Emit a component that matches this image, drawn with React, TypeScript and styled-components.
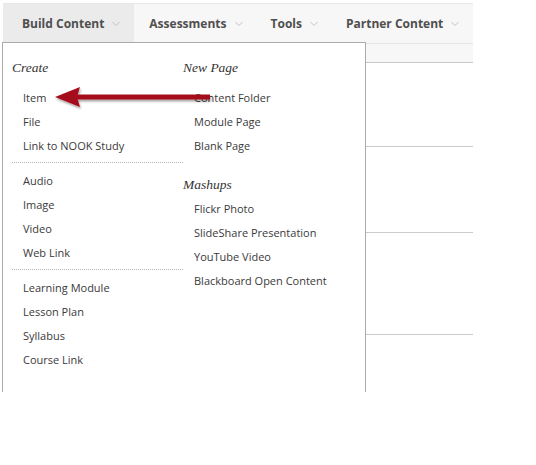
import React from "react";
import styled, { createGlobalStyle } from "styled-components";

const GlobalStyle = createGlobalStyle`
  html, body {
    margin: 0;
    padding: 0;
    background: #fff;
  }
  body {
    font-family: "Open Sans", "Liberation Sans", sans-serif;
  }
`;

const Page = styled.div`
  position: relative;
  width: 536px;
  height: 465px;
  overflow: hidden;
  background: #fff;
`;

const Frame = styled.div`
  width: 470px;
  margin-left: 3px;
  padding-top: 3px;
`;

const NavBar = styled.div`
  display: flex;
  height: 39px;
  background: #f7f7f7;
  border-top: 1px solid #e8e8e8;
  border-bottom: 1px solid #e4e4e4;
`;

const Tab = styled.div<{ $active?: boolean; $pl: number; $pr: number }>`
  display: flex;
  align-items: center;
  gap: 8px;
  padding: 0 ${(p) => p.$pr}px 0 ${(p) => p.$pl}px;
  background: ${(p) => (p.$active ? "#ebebeb" : "transparent")};
  color: #4f4f4f;
  font-size: 12px;
  font-weight: 700;
  white-space: nowrap;
`;

const SubBar = styled.div`
  height: 18px;
  background: #f7f7f7;
  border-bottom: 1px solid #c9c9c9;
`;

const Row = styled.div<{ $h: number }>`
  height: ${(p) => p.$h}px;
  border-bottom: 1px solid #cbcbcb;
`;

const Menu = styled.div`
  position: absolute;
  left: 2px;
  top: 42px;
  width: 364px;
  height: 350px;
  background: #fff;
  border: 1px solid #ababab;
  border-bottom: none;
  display: grid;
  grid-template-columns: 171px 1fr;
  padding: 13px 0 0 9px;
  box-sizing: border-box;
  color: #3d3d3d;
`;

const Column = styled.div`
  display: flex;
  flex-direction: column;
`;

const Heading = styled.div<{ $gap?: boolean; $top?: number }>`
  font-family: "Liberation Serif", "DejaVu Serif", serif;
  font-style: italic;
  font-size: 13.5px;
  line-height: 24px;
  color: #333;
  margin-top: ${(p) => p.$top ?? 0}px;
  margin-bottom: ${(p) => (p.$gap ? 6 : 0)}px;
`;

const Item = styled.div`
  font-size: 11px;
  line-height: 24px;
  padding-left: 11px;
  color: #3a3a3a;
  white-space: nowrap;
`;

const Divider = styled.div`
  margin: 4px 0 6px;
  border-top: 1px dotted #b5b5b5;
`;

const ArrowSvg = styled.svg`
  position: absolute;
  left: 50px;
  top: 82px;
  overflow: visible;
`;

const Chevron = () => (
  <svg width="8" height="6" viewBox="0 0 8 6">
    <polyline points="0.5,1 4,4.5 7.5,1" fill="none" stroke="#c4c4c4" strokeWidth="1" />
  </svg>
);

const tabs = [
  { label: "Build Content", active: true, pl: 19, pr: 14 },
  { label: "Assessments", pl: 15, pr: 13 },
  { label: "Tools", pl: 15, pr: 13 },
  { label: "Partner Content", pl: 15, pr: 14 },
];

const groups = [
  ["Item", "File", "Link to NOOK Study"],
  ["Audio", "Image", "Video", "Web Link"],
  ["Learning Module", "Lesson Plan", "Syllabus", "Course Link"],
];

const App: React.FC = () => {
  return (
    <Page>
      <GlobalStyle />
      <Frame>
        <NavBar>
          {tabs.map((t) => (
            <Tab key={t.label} $active={t.active} $pl={t.pl} $pr={t.pr}>
              {t.label}
              <Chevron />
            </Tab>
          ))}
        </NavBar>
        <SubBar />
        <Row $h={83} />
        <Row $h={85} />
        <Row $h={101} />
      </Frame>

      <Menu>
        <Column>
          <Heading $gap>Create</Heading>
          {groups.map((g, i) => (
            <React.Fragment key={i}>
              {i > 0 && <Divider />}
              {g.map((label) => (
                <Item key={label}>{label}</Item>
              ))}
            </React.Fragment>
          ))}
        </Column>
        <Column>
          <Heading $gap>New Page</Heading>
          <Item>Content Folder</Item>
          <Item>Module Page</Item>
          <Item>Blank Page</Item>
          <Heading $top={15}>Mashups</Heading>
          <Item>Flickr Photo</Item>
          <Item>SlideShare Presentation</Item>
          <Item>YouTube Video</Item>
          <Item>Blackboard Open Content</Item>
        </Column>
      </Menu>

      <ArrowSvg width="170" height="30" viewBox="0 0 170 30">
        <defs>
          <filter id="sh" x="-10%" y="-50%" width="120%" height="200%">
            <feDropShadow dx="1" dy="2" stdDeviation="1.2" floodColor="#000" floodOpacity="0.35" />
          </filter>
        </defs>
        <g filter="url(#sh)">
          <rect x="24" y="12.5" width="136" height="5" fill="#a50f1d" />
          <polygon points="5,15 30,5 27,15 30,25" fill="#a50f1d" />
        </g>
      </ArrowSvg>
    </Page>
  );
};

export default App;
